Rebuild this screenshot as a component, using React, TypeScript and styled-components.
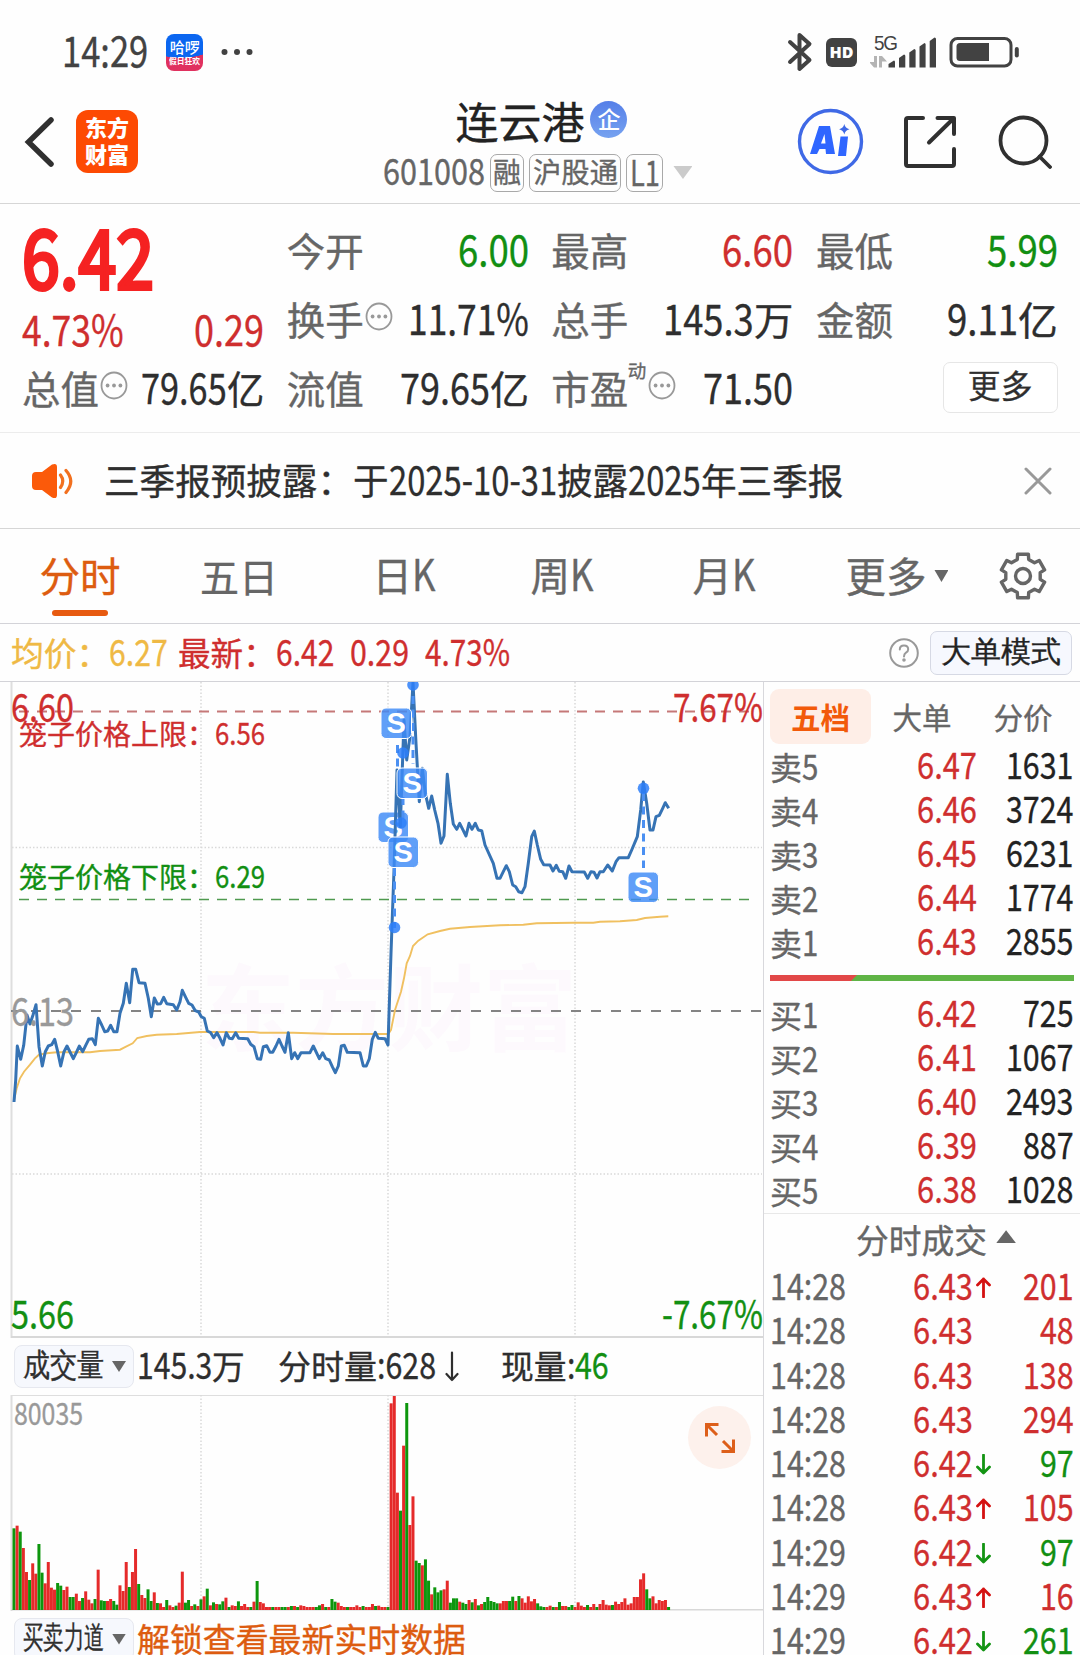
import React from "react";
import styled, { createGlobalStyle } from "styled-components";

const CJK = '"Noto Sans CJK SC"';
const RED = "#cf2e2e";
const GREEN = "#128f12";
const DARK = "#2e2e2e";
const GRAY = "#666666";
const ORANGE = "#dd5c10";

const GlobalStyle = createGlobalStyle`
  * { box-sizing: border-box; }
  body { margin: 0; background: #fff; overflow: hidden; }
  #root { font-family: ${CJK}, sans-serif; }
  svg { display: block; flex: none; }
`;

/* ---------- text with condensed latin runs ---------- */

const LATIN_SIZE = 1.11;
const LATIN_SQUEEZE = 0.83;

let measureContext: CanvasRenderingContext2D | null = null;
function advance(text: string, weight: number) {
  measureContext = measureContext || document.createElement("canvas").getContext("2d")!;
  measureContext.font = `${weight} 100px ${CJK}`;
  return measureContext.measureText(text).width / 100;
}

const Line = styled.span<{ $size: number; $color?: string; $weight: number; $latin: boolean; $stroke: number }>`
  display: inline-flex;
  flex: none;
  align-items: baseline;
  height: ${p => (p.$latin ? 1.25 : 1.15)}em;
  line-height: 1.1em;
  font-size: ${p => p.$size}px;
  font-weight: ${p => p.$weight};
  color: ${p => p.$color || "inherit"};
  -webkit-text-stroke: ${p => p.$stroke}px currentColor;
  stroke-linejoin: round;
  white-space: pre;
`;
const Run = styled.span<{ $width: number; $size: number }>`
  display: block;
  flex: none;
  width: ${p => p.$width}px;
  font-size: ${p => p.$size}px;
`;
const Glyphs = styled.span<{ $scale: number }>`
  display: inline-block;
  transform: scaleX(${p => p.$scale});
  transform-origin: 0 50%;
`;

interface TProps { children: string; size: number; color?: string; weight?: number; w?: number; stroke?: number }
function T({ children, size, color, weight = 400, w, stroke = 0.35 }: TProps) {
  const parts = (children.match(/[\x20-\x7e]+|[^\x20-\x7e]+/g) || []).map(text => {
    const latin = /^[\x20-\x7e]/.test(text);
    const scale = latin ? LATIN_SQUEEZE : 1;
    const fontSize = latin ? size * LATIN_SIZE : size;
    return { text, latin, scale, fontSize, width: advance(text, weight) * fontSize * scale };
  });
  const natural = parts.reduce((sum, p) => sum + p.width, 0);
  const k = w ? w / natural : 1;
  return (
    <Line $size={size} $color={color} $weight={weight} $latin={parts.some(p => p.latin)} $stroke={stroke}>
      {parts.map((p, i) => (
        <Run key={i} $width={p.width * k} $size={p.fontSize}>
          <Glyphs $scale={p.scale * k}>{p.text}</Glyphs>
        </Run>
      ))}
    </Line>
  );
}

/* ---------- page ---------- */

const Page = styled.div`
  width: 1080px;
  height: 1655px;
  overflow: hidden;
  display: flex;
  flex-direction: column;
  background: #fefefe;
`;

const StatusBar = styled.div`
  flex: none;
  height: 80px;
  padding: 24px 61px 0 62px;
  display: flex;
  align-items: center;
  justify-content: space-between;
`;
const StatusGroup = styled.div<{ $gap: number }>`
  display: flex;
  align-items: center;
  gap: ${p => p.$gap}px;
`;
const RideIcon = styled.div`
  width: 37px;
  height: 37px;
  border-radius: 8px;
  overflow: hidden;
  background: radial-gradient(ellipse 44px 24px at 40% 0, #0b66f0 98%, #e0315f 100%);
  color: #fff;
  display: flex;
  flex-direction: column;
  align-items: center;
  padding-top: 5px;
`;
const HdBadge = styled.div`
  width: 31px;
  height: 29px;
  border-radius: 6px;
  background: #424242;
  color: #fff;
  font: 800 16px/29px "Open Sans", sans-serif;
  text-align: center;
`;
const Signal = styled.div`
  position: relative;
  width: 66px;
  height: 34px;
`;
const NetworkLabel = styled.div`
  position: absolute;
  left: 4px;
  top: -2px;
  font: 400 21px/20px "Liberation Sans", sans-serif;
  letter-spacing: -1.5px;
  transform: scaleX(0.9);
  transform-origin: 0 50%;
  color: #424242;
`;

const NavBar = styled.header`
  flex: none;
  height: 124px;
  padding: 0 28px 0 23px;
  border-bottom: 1px solid #d6d6d6;
  display: grid;
  grid-template-columns: 1fr auto 1fr;
  align-items: center;
`;
const NavLeft = styled.div`
  display: flex;
  align-items: center;
  gap: 21px;
`;
const Brand = styled.div`
  width: 62px;
  height: 63px;
  border-radius: 12px;
  background: #fd4a03;
  color: #fff;
  display: flex;
  flex-direction: column;
  align-items: center;
  justify-content: center;
  padding-bottom: 3px;
  span { line-height: 27px; font-size: 22px; font-weight: 900; }
`;
const NavCenter = styled.div`
  display: flex;
  flex-direction: column;
  align-items: center;
  gap: 8px;
  padding-top: 6px;
`;
const TitleRow = styled.div`
  display: flex;
  align-items: center;
  gap: 6px;
  height: 48px;
  margin-left: 8px;
`;
const EnterpriseBadge = styled.div`
  width: 37px;
  height: 37px;
  margin-top: -4px;
  border-radius: 50%;
  background: linear-gradient(#557fe8, #76a2f0);
  display: flex;
  align-items: center;
  justify-content: center;
`;
const CodeRow = styled.div`
  display: flex;
  align-items: center;
  gap: 5px;
  height: 38px;
`;
const Tag = styled.div`
  height: 38px;
  border: 1.5px solid #a9a9a9;
  border-radius: 7px;
  padding: 0 2.5px;
  display: flex;
  align-items: center;
`;
const Caret = styled.i<{ $w: number; $h: number; $color: string; $up?: boolean }>`
  flex: none;
  width: ${p => p.$w}px;
  height: ${p => p.$h}px;
  margin-top: ${p => (p.$up ? -6 : 0)}px;
  background: ${p => p.$color};
  clip-path: ${p => (p.$up ? "polygon(50% 0, 100% 100%, 0 100%)" : "polygon(0 0, 100% 0, 50% 100%)")};
`;
const NavRight = styled.div`
  display: flex;
  align-items: center;
  justify-content: flex-end;
  gap: 40px;
`;

const Quote = styled.section`
  flex: none;
  height: 229px;
  padding: 12px 22px 0 22px;
  border-bottom: 1px solid #ececec;
  display: grid;
  grid-template-columns: repeat(4, 1fr);
  grid-template-rows: repeat(3, 69px);
  column-gap: 22.5px;
`;
const PriceCell = styled.div`
  grid-row: span 2;
  display: flex;
  flex-direction: column;
`;
const BigPrice = styled.div`
  height: 90px;
  padding-bottom: 3px;
  display: flex;
  align-items: center;
`;
const Cell = styled.div`
  display: flex;
  align-items: center;
  justify-content: space-between;
`;
const CellLabel = styled.div`
  display: flex;
  align-items: center;
  gap: 1.5px;
`;
const Superscript = styled.div`
  align-self: flex-start;
  width: 20px;
  display: flex;
  margin: -6px -1px 0 -2px;
`;
const MoreCell = styled.div`
  display: flex;
  align-items: center;
  justify-content: flex-end;
`;
const MoreButton = styled.button`
  width: 115px;
  height: 51px;
  margin-top: -2px;
  padding: 0;
  border: 1.5px solid #e6e6e6;
  border-radius: 7px;
  background: #fff;
  display: flex;
  align-items: center;
  justify-content: center;
`;

const Notice = styled.section`
  flex: none;
  height: 96px;
  padding: 0 28px 0 31px;
  border-bottom: 1px solid #d6d6d6;
  display: flex;
  align-items: center;
`;
const NoticeText = styled.div`
  flex: 1;
  display: flex;
  padding-left: 31px;
`;

const Tabs = styled.nav`
  flex: none;
  height: 95px;
  border-bottom: 1px solid #d3d3d8;
  display: flex;
`;
const Tab = styled.div<{ $w: number; $active?: boolean }>`
  width: ${p => p.$w}px;
  display: flex;
  align-items: center;
  justify-content: center;
  gap: 8px;
  position: relative;
  color: ${p => (p.$active ? ORANGE : GRAY)};
  &::after {
    content: "";
    display: ${p => (p.$active ? "block" : "none")};
    position: absolute;
    left: 50%;
    bottom: 7px;
    width: 56px;
    margin-left: -28px;
    height: 6px;
    border-radius: 3px;
    background: #e75a10;
  }
`;

const InfoLine = styled.div`
  flex: none;
  height: 58px;
  padding: 0 8px 0 11px;
  border-bottom: 1px solid #d3d3d8;
  display: flex;
  align-items: center;
`;
const InfoValues = styled.div`
  flex: 1;
  display: flex;
  align-items: center;
`;
const Gap = styled.i<{ $w: number }>`
  flex: none;
  width: ${p => p.$w}px;
`;
const ModeButton = styled.button`
  width: 142px;
  height: 44px;
  margin-left: 11px;
  padding: 0;
  border: 1px solid #d6d9e4;
  border-radius: 7px;
  background: #f6f8fe;
  display: flex;
  align-items: center;
  justify-content: center;
`;

const Body = styled.main`
  flex: 1;
  display: flex;
  align-items: stretch;
`;
const Charts = styled.div`
  width: 764px;
  flex: none;
  border-right: 1.5px solid #d8d8dc;
`;
const Plot = styled.div<{ $h: number }>`
  position: relative;
  height: ${p => p.$h}px;
`;
const PlotLabel = styled.div<{ $y: number; $x?: number; $right?: number }>`
  position: absolute;
  display: flex;
  top: ${p => p.$y}px;
  ${p => (p.$right !== undefined ? `right: ${p.$right}px;` : `left: ${p.$x}px;`)}
  transform: translateY(-50%);
`;
const IndicatorBar = styled.div<{ $h: number }>`
  height: ${p => p.$h}px;
  padding-left: 14px;
  display: flex;
  align-items: center;
`;
const Picker = styled.button`
  width: 120px;
  height: 43px;
  margin-right: 3px;
  padding: 0 7px 0 7.5px;
  border: 1px solid #e6e8ef;
  border-radius: 8px;
  background: #f6f8fd;
  display: flex;
  align-items: center;
  justify-content: space-between;
`;
const ExpandButton = styled.div`
  position: absolute;
  left: 688px;
  top: 11px;
  width: 63px;
  height: 63px;
  border-radius: 50%;
  background: #fdf1ec;
  display: flex;
  align-items: center;
  justify-content: center;
`;

const Side = styled.aside`
  flex: 1;
  padding: 0 6px 0 6px;
`;
const SideTabs = styled.div`
  height: 63px;
  padding-top: 7px;
  display: flex;
`;
const SideTab = styled.div<{ $w: number; $active?: boolean }>`
  width: ${p => p.$w}px;
  height: 55px;
  border-radius: 9px;
  background: ${p => (p.$active ? "#feeee7" : "none")};
  display: flex;
  align-items: center;
  justify-content: center;
`;
const BookRow = styled.div<{ $h: number; $price: number }>`
  height: ${p => p.$h}px;
  display: grid;
  grid-template-columns: 90px ${p => p.$price - 90}px 18px 1fr;
  align-items: center;
  padding-right: 0.5px;
`;
const Right = styled.div`
  display: flex;
  justify-content: flex-end;
  align-items: center;
`;
const Balance = styled.div`
  height: 6px;
  margin: 10px 0 12px;
  background: linear-gradient(135deg, #e24848 61px, #5fb446 62px);
`;
const TradesHeader = styled.div`
  height: 52.5px;
  margin: 0 -6px;
  padding: 0 17px 0 45px;
  border-top: 1px solid #e8e8e8;
  display: flex;
  align-items: center;
  justify-content: center;
  gap: 9px;
`;

/* ---------- icons ---------- */

const InfoDots = () => (
  <svg width="28" height="29" viewBox="0 0 28 29" style={{ marginTop: -5 }}>
    <ellipse cx="14" cy="14.5" rx="12.5" ry="13" fill="none" stroke="#999" strokeWidth="1.8" />
    {[7.6, 14, 20.4].map(x => <circle key={x} cx={x} cy="14.5" r="1.9" fill="#999" />)}
  </svg>
);

const StatusIcons = () => (
  <StatusGroup $gap={13}>
    <svg width="26" height="40" viewBox="0 0 26 40" fill="none" stroke="#424242" strokeWidth="4" strokeLinejoin="round" strokeLinecap="round">
      <path d="M3 10 L22.5 28 L12.5 37 L12.5 3 L22.5 12 L3 30" />
    </svg>
    <HdBadge>HD</HdBadge>
    <Signal>
      <NetworkLabel>5G</NetworkLabel>
      <svg width="66" height="34" viewBox="869 35 66 34">
        <g fill="#b4b4b4">
          <path d="M876 56V67.5H873L868 62H873V56ZM878 67.5V56H881L886 61.5H881V67.5Z" />
        </g>
        <g fill="#424242">
          <path d="M887.5 67.5V64L893 60.5Q894 60.5 894 62V67.5Z" />
          <path d="M898 67.5V58L903 54.5Q904.3 54.5 904.3 56V67.5Z" />
          <path d="M908.3 67.5V52.5L913.3 49Q914.6 49 914.6 50.5V67.5Z" />
          <path d="M918.5 67.5V46.5L923.5 43Q924.6 43 924.6 44.5V67.5Z" />
          <path d="M928.7 67.5V41L933.5 37.5Q935 37.5 935 39V67.5Z" />
        </g>
      </svg>
    </Signal>
    <svg width="70" height="32" viewBox="948 36 70 32">
      <rect x="950" y="38.5" width="60" height="27.5" rx="6.5" fill="none" stroke="#424242" strokeWidth="3" />
      <path d="M959 43H988V61H959Q955.5 61 955.5 57.5V46.5Q955.5 43 959 43Z" fill="#424242" />
      <rect x="1013.8" y="47" width="4" height="10.5" rx="2" fill="#424242" />
    </svg>
  </StatusGroup>
);

const AiIcon = () => (
  <svg width="67" height="67" viewBox="797.5 108 67 67">
    <circle cx="831" cy="141.5" r="31" fill="none" stroke="#3f69e6" strokeWidth="3.4" />
    <path fillRule="evenodd" d="M819.5 126H830.5L835.5 154H826.5L826 149H820L817.5 154H810.5ZM825 134L821.5 143.5H826Z" fill="#2f66ff" />
    <path d="M841 136.5H848.5L846.5 156H838.5Z" fill="#2f66ff" />
    <path d="M844.8 124Q845.8 128.3 850 129.3Q845.8 130.3 844.8 134.6Q843.8 130.3 839.6 129.3Q843.8 128.3 844.8 124Z" fill="#3f69e6" />
  </svg>
);

const ShareIcon = () => (
  <svg width="54" height="54" viewBox="904 115 54 54" fill="none" stroke="#303030" strokeWidth="4" strokeLinecap="round" strokeLinejoin="round">
    <path d="M923 118H908Q906 118 906 120V164Q906 166 908 166H952Q954 166 954 164V149" />
    <path d="M937.5 118H954V134M953 119L929 142.5" />
  </svg>
);

const SearchIcon = () => (
  <svg width="54" height="54" viewBox="998 114 54 54" fill="none" stroke="#303030" strokeWidth="3.8" strokeLinecap="round">
    <circle cx="1023.5" cy="139.5" r="23" />
    <path d="M1039.5 155.5L1050 166" />
  </svg>
);

const SpeakerIcon = () => (
  <svg width="42" height="36" viewBox="31 462 42 36">
    <path d="M36 471H42L52 463.5Q57 461.5 57 466V494Q57 498.500 52 496.500L42 489H36Q32 489 32 485V475Q32 471 36 471Z" fill="#fb5a0a" />
    <path d="M60.500 474Q65 480 60.500 486.500M66 469.500Q75.500 480 66 491.500" fill="none" stroke="#f2701f" strokeWidth="3.200" strokeLinecap="round" />
  </svg>
);

const gearPath = (() => {
  const points: string[] = [];
  for (let i = 0; i < 6; i++) {
    [[-19, 17.5], [-14, 22.5], [14, 22.5], [19, 17.5]].forEach(([deg, r]) => {
      const a = ((i * 60 + deg - 90) * Math.PI) / 180;
      points.push(`${(24 + r * Math.cos(a)).toFixed(1)} ${(24.5 + r * Math.sin(a)).toFixed(1)}`);
    });
  }
  return `M${points.join("L")}Z`;
})();
const GearIcon = () => (
  <svg width="48" height="50" viewBox="0 0 48 49" fill="none" stroke={GRAY} strokeWidth="3.4" strokeLinejoin="round">
    <path d={gearPath} />
    <circle cx="24" cy="24.500" r="7.500" />
  </svg>
);

const TickArrow = ({ up }: { up: boolean }) => (
  <svg width="15" height="21" viewBox="0 0 15 21" fill="none" stroke={up ? "#d41111" : "#139413"} strokeWidth="2.800" strokeLinecap="round" strokeLinejoin="round" transform={up ? undefined : "rotate(180)"}>
    <path d="M7.500 20V2M1.500 8L7.500 2L13.500 8" />
  </svg>
);

/* ---------- chart data ---------- */

type P = [number, number];
const morning: P[] = [[42,606],[47,540],[52,438],[62,478],[71,436],[81,345],[90,372],[99,345],[108,314],[117,440],[127,498],[136,455],[145,438],[155,434],[164,418],[173,455],[182,498],[192,455],[201,438],[210,456],[220,476],[229,458],[238,438],[248,455],[257,436],[266,418],[277,416],[286,434],[295,355],[305,375],[314,395],[323,393],[332,376],[341,395],[351,395],[360,340],[370,310],[379,250],[389,308],[398,208],[407,208],[417,248],[435,250],[445,295],[454,350],[463,294],[472,312],[482,311],[491,292],[500,311],[520,314],[530,330],[540,305],[547,271],[557,292],[566,310],[576,315],[586,332],[596,336],[604,350],[613,355],[622,393],[632,398],[641,413],[651,398],[660,415],[669,435],[679,398],[688,415],[697,416],[707,398],[716,415],[743,416],[752,433],[762,440],[772,476],[782,478],[790,440],[800,437],[810,457],[818,457],[828,438],[837,418],[846,438],[855,457],[865,398],[875,476],[884,458],[893,476],[903,458],[930,458],[940,438],[958,476],[968,458],[977,476],[988,480],[997,500],[1006,518],[1015,498],[1024,438],[1033,436],[1042,457],[1080,458],[1090,498],[1099,498],[1108,476],[1117,418],[1126,397],[1135,415],[1155,416],[1164,435]];
const afternoon: P[] = [[93,850],[102,600],[111,300],[121,470],[132,150],[140,270],[150,200],[159,38],[168,220],[178,395],[187,295],[196,370],[206,415],[215,378],[224,420],[234,460],[243,520],[252,498],[262,313],[271,400],[280,462],[290,478],[299,460],[308,478],[318,498],[327,460],[336,478],[346,460],[355,480],[365,482],[375,525],[400,580],[411,625],[420,625],[430,605],[439,587],[448,605],[458,645],[467,650],[476,665],[486,668],[495,650],[505,580],[515,500],[523,483],[532,525],[542,568],[551,584],[570,585],[579,603],[589,586],[598,604],[608,605],[617,625],[627,588],[636,605],[673,606],[683,625],[693,605],[702,607],[711,624],[720,605],[730,605],[743,585],[757,603],[768,575],[777,563],[805,563],[815,540],[832,500],[842,420],[850,336],[860,400],[870,480],[879,480],[888,440],[898,436],[908,415],[916,398],[926,415]];
const avgMorning: P[] = [[42,600],[50,565],[60,535],[72,515],[90,494],[105,475],[117,464],[140,460],[170,457],[270,457],[300,453],[360,449],[378,440],[398,430],[412,414],[440,408],[470,404],[530,402],[600,396],[760,396],[780,398],[880,398],[1000,402],[1165,402]];
const avgAfternoon: P[] = [[93,1080],[105,1020],[123,965],[132,925],[140,880],[150,858],[159,828],[175,812],[203,793],[240,783],[270,776],[330,771],[420,766],[490,764],[530,760],[640,758],[700,758],[720,755],[780,754],[830,750],[855,744],[900,740],[925,739]];

const toLine = (am: P[], pm: P[]) =>
  [...am.map(([x, y]) => [x / 3, 218 + y / 3]), ...pm.map(([x, y]) => [360 + x / 3, y / 3 - 12])]
    .map(([x, y]) => `${x.toFixed(1)},${y.toFixed(1)}`)
    .join(" ");

const volumes =
  "245g 253r 235g 186r 114r 90g 140r 109r 198g 112g 80r 144r 67r 61r 81g 73g 60r 70r 39g 39g 49r 27r 36g 56r 31r 20r 33g 121r 29g 27g 27r 33r 27g 16g 74r 57r 144r 69g 114r 183r 78g 45r 36r 62g 27g 53r 21g 20r 9r 30g 14r 9r 13g 22r 115r 22g 30g 12r 17g 12r 32g 41r 64g 14r 23g 18r 17g 26g 37r 9g 14r 12r 26g 12r 18r 9r 9g 25r 87g 24r 20r 9r 9r 9g 9r 9r 9g 9g 9r 12g 12r 9g 14r 12r 9r 9r 9r 9g 14g 18r 9g 9r 33g 25g 22r 12r 9r 9g 9r 9r 14r 9r 12g 9r 9r 18r 12g 13r 9r 9r 9g 620r 642r 352r 298g 493r 621g 255r 341r 148g 141g 134r 152g 88g 47r 68g 53g 59g 62r 88r 22g 35g 35g 25r 22g 18g 30r 23g 33r 14g 18r 24g 39g 27g 24g 20g 20r 27r 27r 27g 40g 27r 42g 35r 22r 41r 26r 33r 20g 11g 9g 9r 13r 9g 9r 24g 12r 12r 9g 15g 9r 23r 13r 9r 15g 9r 18r 9g 18r 30r 16r 14r 15g 25r 18r 24r 35r 16r 20r 39r 39r 92r 110r 62g 35g 41r 20r 30r 27r 30r 9g"
    .split(" ")
    .map(v => ({ h: parseInt(v, 10) / 3, up: v.endsWith("r") }));

const Badge = ({ x, y }: { x: number; y: number }) => (
  <g>
    <rect x={x} y={y} width="30.500" height="30.500" rx="5" fill="#3d8af7" fillOpacity="0.82" stroke="#fff" strokeWidth="1" />
    <text x={x + 15.200} y={y + 25} textAnchor="middle" fontFamily="'Liberation Sans', sans-serif" fontWeight="700" fontSize="29" fill="#fff">S</text>
  </g>
);

const PriceChart = () => (
  <svg width="763" height="656" viewBox="0 0 763 656">
    <text x="389" y="362" textAnchor="middle" fontFamily="'Noto Sans CJK SC', sans-serif" fontWeight="700" fontSize="94" fill="#fdf9fd">东方财富</text>
    <g stroke="#d9d9d9" strokeWidth="1.500" strokeDasharray="1.500 2">
      <path d="M201 0V655M388 0V655M575 0V655M12 165.500H762M12 492H762" fill="none" />
    </g>
    <path d="M11.500 0V656" stroke="#dedede" strokeWidth="2" />
    <path d="M11 655H763" stroke="#d8d8d8" strokeWidth="2" />
    <path d="M19 29.500H750" stroke="#c57878" strokeWidth="2" strokeDasharray="10 8" />
    <path d="M19 217.500H750" stroke="#4f9a4f" strokeWidth="1.600" strokeDasharray="10 8" />
    <path d="M11 329H762" stroke="#848484" strokeWidth="2" strokeDasharray="10 10" />
    <polyline points={toLine(avgMorning, avgAfternoon)} fill="none" stroke="#f0c060" strokeWidth="1.900" />
    <Badge x={378} y={130} />
    <polyline points={toLine(morning, afternoon)} fill="none" stroke="#3673b4" strokeWidth="3" strokeLinejoin="round" />
    <g stroke="#4b90f2" strokeWidth="3" strokeDasharray="8 5.500" fill="none">
      <path d="M397.500 63V90M413 14V82M394.500 186V246M403 115V142M643.500 111V186" />
    </g>
    <g fill="#2d7ff9" fillOpacity="0.850">
      <circle cx="413" cy="3" r="5.800" />
      <circle cx="403" cy="71" r="5.800" />
      <circle cx="394.500" cy="245.500" r="5.800" />
      <circle cx="643.500" cy="106.300" r="5.800" />
      <circle cx="401" cy="141" r="5.800" />
    </g>
    <Badge x={381} y={26} />
    <Badge x={397} y={86} />
    <Badge x={388} y={155} />
    <Badge x={628} y={190} />
  </svg>
);

const VolumeChart = () => (
  <svg width="763" height="216" viewBox="0 0 763 216">
    <path d="M11 0.500H763" stroke="#dedede" strokeWidth="1" />
    <path d="M201 0V215M388 0V215M575 0V215" fill="none" stroke="#d9d9d9" strokeWidth="1.500" strokeDasharray="1.500 2" />
    <path d="M11.500 0V216" stroke="#dedede" strokeWidth="2" />
    <path d="M11 214.800H763" stroke="#d8d8d8" strokeWidth="1.500" />
    {volumes.map((v, i) => (
      <rect key={i} x={12.500 + i * 3.117} y={215 - v.h} width="3" height={v.h} fill={v.up ? "#e52a2a" : "#0d960d"} />
    ))}
  </svg>
);

const sells = [["卖5", "6.47", "1631"], ["卖4", "6.46", "3724"], ["卖3", "6.45", "6231"], ["卖2", "6.44", "1774"], ["卖1", "6.43", "2855"]];
const buys = [["买1", "6.42", "725"], ["买2", "6.41", "1067"], ["买3", "6.40", "2493"], ["买4", "6.39", "887"], ["买5", "6.38", "1028"]];
const trades: [string, string, string, number, boolean][] = [
  ["14:28", "6.43", "201", 1, true],
  ["14:28", "6.43", "48", 0, true],
  ["14:28", "6.43", "138", 0, true],
  ["14:28", "6.43", "294", 0, true],
  ["14:28", "6.42", "97", -1, false],
  ["14:28", "6.43", "105", 1, true],
  ["14:29", "6.42", "97", -1, false],
  ["14:29", "6.43", "16", 1, true],
  ["14:29", "6.42", "261", -1, false],
];

const Book = ({ rows }: { rows: string[][] }) => (
  <>
    {rows.map(([label, price, volume]) => (
      <BookRow key={label} $h={44} $price={206.5}>
        <T size={32} color={GRAY}>{label}</T>
        <Right><T size={33} color={RED} w={60}>{price}</T></Right>
        <i />
        <Right><T size={33} color="#222">{volume}</T></Right>
      </BookRow>
    ))}
  </>
);

interface StatProps { label: string; value: string; color?: string; info?: boolean; sup?: string; w?: number }
const Stat = ({ label, value, color = DARK, info, sup, w }: StatProps) => (
  <Cell>
    <CellLabel>
      <T size={38.5} color={GRAY}>{label}</T>
      {sup && <Superscript><T size={18.500} color={GRAY}>{sup}</T></Superscript>}
      {info && <InfoDots />}
    </CellLabel>
    <T size={38.5} color={color} w={w}>{value}</T>
  </Cell>
);

export default function App() {
  return (
    <Page>
      <GlobalStyle />
      <StatusBar>
        <StatusGroup $gap={18}>
          <T size={37.500} color="#424242">14:29</T>
          <RideIcon>
            <T size={15} weight={500} stroke={0}>哈啰</T>
            <T size={8.500} weight={700} w={31} stroke={0}>假日狂欢</T>
          </RideIcon>
          <svg width="34" height="8" viewBox="0 0 34 8" fill="#424242">
            <circle cx="3.500" cy="4" r="3" /><circle cx="16" cy="4" r="3" /><circle cx="28.500" cy="4" r="3" />
          </svg>
        </StatusGroup>
        <StatusIcons />
      </StatusBar>

      <NavBar>
        <NavLeft>
          <svg width="32" height="54" viewBox="0 0 32 54" fill="none" stroke="#303030" strokeWidth="5.500" strokeLinecap="round">
            <path d="M28 5L5.500 27L28 49" />
          </svg>
          <Brand><span>东方</span><span>财富</span></Brand>
        </NavLeft>
        <NavCenter>
          <TitleRow>
            <T size={43} color="#222">连云港</T>
            <EnterpriseBadge><T size={23} color="#fff" weight={500} stroke={0}>企</T></EnterpriseBadge>
          </TitleRow>
          <CodeRow>
            <T size={33} color={GRAY} w={102}>601008</T>
            <Tag><T size={28} color={GRAY}>融</T></Tag>
            <Tag><T size={28} color={GRAY} w={85}>沪股通</T></Tag>
            <Tag><T size={32} color={GRAY} w={30}>L1</T></Tag>
            <Gap $w={0} />
            <Caret $w={19} $h={13} $color="#cbcbcb" />
          </CodeRow>
        </NavCenter>
        <NavRight>
          <AiIcon />
          <ShareIcon />
          <SearchIcon />
        </NavRight>
      </NavBar>

      <Quote>
        <PriceCell>
          <BigPrice><T size={73} color="#f52222" stroke={4} w={132}>6.42</T></BigPrice>
          <Cell>
            <T size={38.500} color={RED}>4.73%</T>
            <T size={38.500} color={RED} w={70}>0.29</T>
          </Cell>
        </PriceCell>
        <Stat label="今开" value="6.00" color={GREEN} w={71} />
        <Stat label="最高" value="6.60" color={RED} w={71} />
        <Stat label="最低" value="5.99" color={GREEN} w={71} />
        <Stat label="换手" value="11.71%" info w={121} />
        <Stat label="总手" value="145.3万" w={130} />
        <Stat label="金额" value="9.11亿" w={111} />
        <Stat label="总值" value="79.65亿" info w={123} />
        <Stat label="流值" value="79.65亿" w={129} />
        <Stat label="市盈" value="71.50" info sup="动" w={90} />
        <MoreCell><MoreButton><T size={32.500} color={DARK}>更多</T></MoreButton></MoreCell>
      </Quote>

      <Notice>
        <SpeakerIcon />
        <NoticeText><T size={35.800} color={DARK} w={739}>三季报预披露：于2025-10-31披露2025年三季报</T></NoticeText>
        <svg width="28" height="28" viewBox="0 0 28 28" stroke="#999" strokeWidth="3" strokeLinecap="round">
          <path d="M2 2L26 26M26 2L2 26" />
        </svg>
      </Notice>

      <Tabs>
        <Tab $w={160} $active><T size={40.500}>分时</T></Tab>
        <Tab $w={158}><T size={39}>五日</T></Tab>
        <Tab $w={172}><T size={39.500}>日K</T></Tab>
        <Tab $w={144}><T size={39.500}>周K</T></Tab>
        <Tab $w={180}><T size={39.500}>月K</T></Tab>
        <Tab $w={166}><T size={40.500}>更多</T><Caret $w={14} $h={12} $color={GRAY} /></Tab>
        <Tab $w={86}><GearIcon /></Tab>
      </Tabs>

      <InfoLine>
        <InfoValues>
          <T size={32.800} color="#efb944" w={157}>均价：6.27</T>
          <Gap $w={10} />
          <T size={32.800} color={RED} w={156}>最新：6.42</T>
          <Gap $w={16} />
          <T size={32.800} color={RED} w={59}>0.29</T>
          <Gap $w={16} />
          <T size={32.800} color={RED} w={85}>4.73%</T>
        </InfoValues>
        <svg width="30" height="30" viewBox="0 0 30 30" fill="none" stroke="#999" strokeWidth="2">
          <circle cx="15" cy="15" r="13.800" />
          <path d="M10.800 11.500Q10.800 7.500 15 7.500Q19.200 7.500 19.200 11.200Q19.200 13.400 17 14.700Q15 16 15 18.500" strokeLinecap="round" />
          <circle cx="15" cy="22" r="0.800" fill="#999" />
        </svg>
        <ModeButton><T size={30} color="#222">大单模式</T></ModeButton>
      </InfoLine>

      <Body>
        <Charts>
          <Plot $h={656}>
            <PriceChart />
            <PlotLabel $x={11} $y={25}><T size={35.500} color={RED} w={63}>6.60</T></PlotLabel>
            <PlotLabel $x={19} $y={53}><T size={28.100} color={RED} w={246}>笼子价格上限：6.56</T></PlotLabel>
            <PlotLabel $x={19} $y={196}><T size={28.100} color={GREEN} w={246}>笼子价格下限：6.29</T></PlotLabel>
            <PlotLabel $x={11} $y={329}><T size={35.500} color="#999" w={63}>6.13</T></PlotLabel>
            <PlotLabel $x={11} $y={632}><T size={35.500} color={GREEN} w={63}>5.66</T></PlotLabel>
            <PlotLabel $right={0} $y={25}><T size={35.500} color={RED} w={90}>7.67%</T></PlotLabel>
            <PlotLabel $right={0} $y={632}><T size={35.500} color={GREEN} w={101}>-7.67%</T></PlotLabel>
          </Plot>
          <IndicatorBar $h={57}>
            <Picker><T size={31.500} color={DARK} w={80}>成交量</T><Caret $w={14} $h={11} $color={GRAY} /></Picker>
            <T size={33} color={DARK} w={108}>145.3万</T>
            <Gap $w={33} />
            <T size={33} color={DARK} w={158}>分时量:628</T>
            <Gap $w={9} />
            <svg width="14" height="31" viewBox="0 0 14 31" fill="none" stroke={DARK} strokeWidth="2.200" strokeLinecap="round" strokeLinejoin="round">
              <path d="M7 1.500V29M1.500 23L7 29L12.500 23" />
            </svg>
            <Gap $w={42} />
            <T size={33} color={DARK} w={74}>现量:</T>
            <T size={33} color={GREEN}>46</T>
          </IndicatorBar>
          <Plot $h={216}>
            <VolumeChart />
            <PlotLabel $x={13.500} $y={20}><T size={27} color="#999">80035</T></PlotLabel>
            <ExpandButton>
              <svg width="32" height="32" viewBox="0 0 32 32" fill="none" stroke="#dd5f1a" strokeWidth="3">
                <path d="M2.500 14.500V2.500H14.500M3 3L13 13M29.500 17.500V29.500H17.500M29 29L19 19" />
              </svg>
            </ExpandButton>
          </Plot>
          <IndicatorBar $h={56}>
            <Picker><T size={30.500} color={DARK} w={80}>买卖力道</T><Caret $w={14} $h={11} $color={GRAY} /></Picker>
            <T size={33} color={ORANGE} w={329}>解锁查看最新实时数据</T>
          </IndicatorBar>
        </Charts>

        <Side>
          <SideTabs>
            <SideTab $w={101} $active><T size={29.500} color="#f25a0a" weight={700} stroke={0}>五档</T></SideTab>
            <SideTab $w={102}><T size={29.500} color={GRAY}>大单</T></SideTab>
            <SideTab $w={100}><T size={29.500} color={GRAY}>分价</T></SideTab>
          </SideTabs>
          <Book rows={sells} />
          <Balance />
          <Book rows={buys} />
          <TradesHeader>
            <T size={32.800} color={GRAY}>分时成交</T>
            <Caret $w={20} $h={13} $color={GRAY} $up />
          </TradesHeader>
          {trades.map(([time, price, volume, tick, up], i) => (
            <BookRow key={i} $h={44.25} $price={203}>
              <T size={33} color={GRAY} w={76}>{time}</T>
              <Right><T size={33} color={RED} w={60}>{price}</T></Right>
              <Right>{tick !== 0 && <TickArrow up={tick > 0} />}</Right>
              <Right><T size={33} color={up ? RED : GREEN}>{volume}</T></Right>
            </BookRow>
          ))}
        </Side>
      </Body>
    </Page>
  );
}
